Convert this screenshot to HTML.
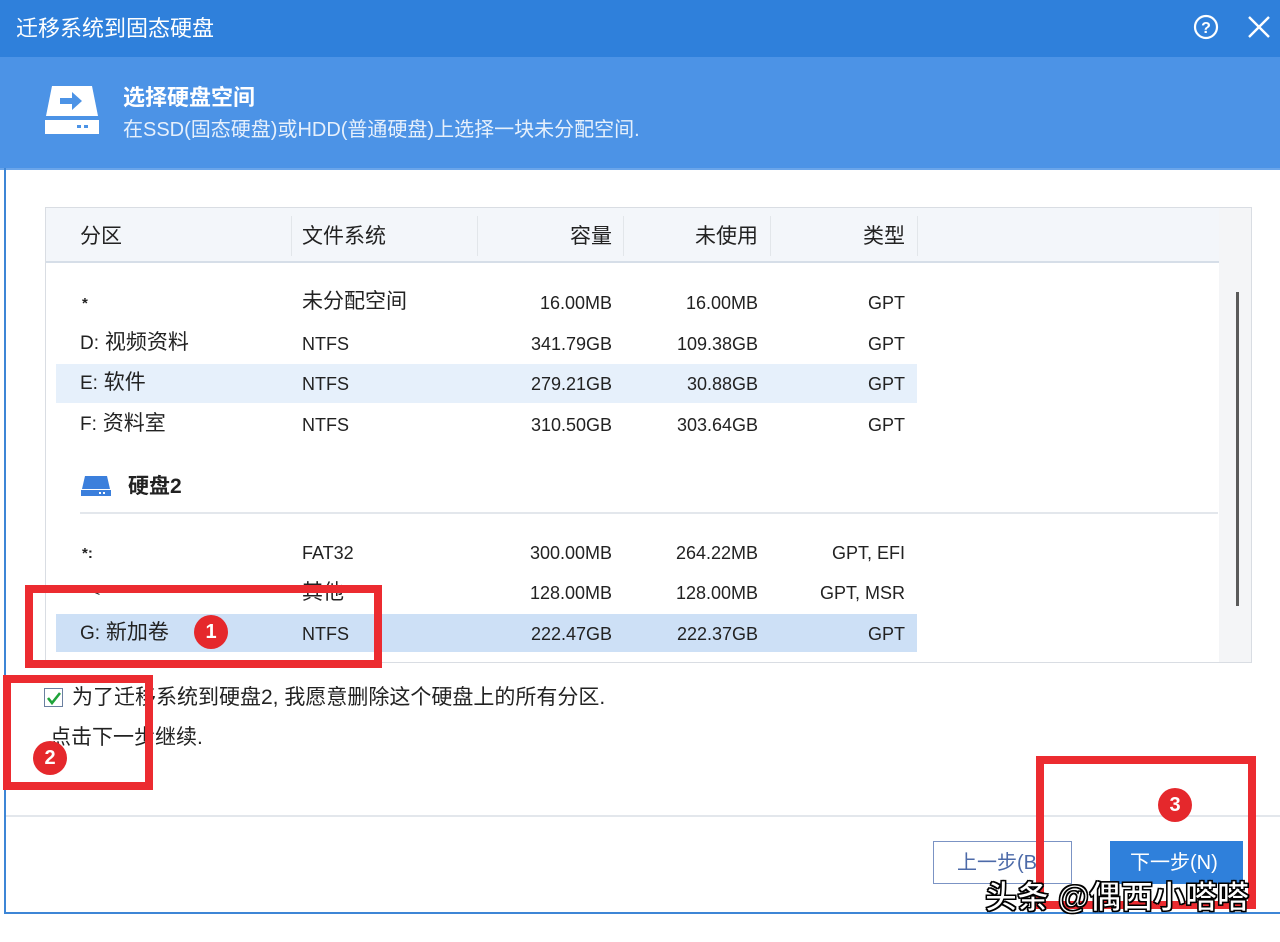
<!DOCTYPE html>
<html><head><meta charset="utf-8">
<style>
*{margin:0;padding:0;box-sizing:border-box}
body{width:1280px;height:942px;background:#fff;position:relative;overflow:hidden;font-family:"Liberation Sans","Noto Sans CJK SC",sans-serif;color:#222}
.a{position:absolute}
.t{position:absolute;font-size:20px;line-height:24px;white-space:nowrap}
.r{text-align:right}
.box{position:absolute;border:8px solid #ec2b30}
.c{position:absolute;width:34px;height:34px;border-radius:50%;background:#e5282c;color:#fff;font-size:20px;font-weight:bold;text-align:center;line-height:34px}
</style></head><body>
<div class="a" style="left:0;top:0;width:1280px;height:57px;background:#2f80db"></div>
<div class="t" style="left:16px;top:16px;color:#fff;font-size:22px;line-height:26px">迁移系统到固态硬盘</div>
<svg class="a" style="left:1192px;top:13px" width="28" height="28"><circle cx="14" cy="14" r="11" fill="none" stroke="#fff" stroke-width="2.2"/><text x="14" y="20" font-size="16" font-weight="bold" fill="#fff" text-anchor="middle" font-family="Liberation Sans">?</text></svg>
<svg class="a" style="left:1246px;top:14px" width="26" height="26"><path d="M3 3L23 23M23 3L3 23" stroke="#fff" stroke-width="2.4"/></svg>
<div class="a" style="left:0;top:57px;width:1280px;height:111px;background:#4c93e6"></div>
<div class="a" style="left:0;top:168px;width:1280px;height:2px;background:#6aa5ea"></div>
<svg class="a" style="left:44px;top:82px" width="56" height="56"><path d="M8 4H48L54 34H2Z" fill="#fff"/><rect x="1" y="38" width="54" height="14" fill="#fff"/><rect x="33" y="43" width="4" height="3" fill="#4c93e6"/><rect x="40" y="43" width="4" height="3" fill="#4c93e6"/><path d="M16 16H28V10L38 19L28 28V22H16Z" fill="#4c93e6"/></svg>
<div class="t" style="left:123px;top:86px;color:#fff;font-size:22px;font-weight:bold">选择硬盘空间</div>
<div class="t" style="left:123px;top:118px;color:#e6f0fc;font-size:20px">在SSD(固态硬盘)或HDD(普通硬盘)上选择一块未分配空间.</div>
<div class="a" style="left:4px;top:168px;width:2px;height:746px;background:#3d86d6"></div>
<div class="a" style="left:4px;top:912px;width:1276px;height:2px;background:#3d86d6"></div>

<div class="a" style="left:45px;top:207px;width:1207px;height:456px;border:1px solid #d9dde3;background:#fff"></div>
<div class="a" style="left:46px;top:208px;width:1173px;height:55px;background:#f3f6fa;border-bottom:2px solid #d6dee8"></div>
<div class="a" style="left:1219px;top:208px;width:32px;height:454px;background:#f4f5f7"></div>
<div class="a" style="left:1236px;top:292px;width:3px;height:314px;background:#5a5a5a"></div>
<div class="a" style="left:291px;top:216px;width:1px;height:40px;background:#e2e6ea"></div>
<div class="a" style="left:477px;top:216px;width:1px;height:40px;background:#e2e6ea"></div>
<div class="a" style="left:623px;top:216px;width:1px;height:40px;background:#e2e6ea"></div>
<div class="a" style="left:770px;top:216px;width:1px;height:40px;background:#e2e6ea"></div>
<div class="a" style="left:917px;top:216px;width:1px;height:40px;background:#e2e6ea"></div>
<div class="t" style="left:80px;top:225px;font-size:21px">分区</div>
<div class="t" style="left:302px;top:225px;font-size:21px">文件系统</div>
<div class="t r" style="left:500px;width:112px;top:225px;font-size:21px">容量</div>
<div class="t r" style="left:640px;width:118px;top:225px;font-size:21px">未使用</div>
<div class="t r" style="left:790px;width:115px;top:225px;font-size:21px">类型</div>

<div class="a" style="left:56px;top:364px;width:861px;height:39px;background:#e6f0fb"></div>
<div class="a" style="left:56px;top:614px;width:861px;height:38px;background:#cde0f6"></div>

<div class="t" style="left:82px;top:292px;font-size:15px;font-weight:bold">*</div>
<div class="t" style="left:302px;top:290px;font-size:21px">未分配空间</div>
<div class="t r" style="left:480px;width:132px;top:291px;font-size:18px">16.00MB</div>
<div class="t r" style="left:630px;width:128px;top:291px;font-size:18px">16.00MB</div>
<div class="t r" style="left:790px;width:115px;top:291px;font-size:18px">GPT</div>

<div class="t" style="left:80px;top:331px;font-size:21px"><span style="font-size:19px">D:</span> 视频资料</div>
<div class="t" style="left:302px;top:332px;font-size:18px">NTFS</div>
<div class="t r" style="left:480px;width:132px;top:332px;font-size:18px">341.79GB</div>
<div class="t r" style="left:630px;width:128px;top:332px;font-size:18px">109.38GB</div>
<div class="t r" style="left:790px;width:115px;top:332px;font-size:18px">GPT</div>

<div class="t" style="left:80px;top:371px;font-size:21px"><span style="font-size:19px">E:</span> 软件</div>
<div class="t" style="left:302px;top:372px;font-size:18px">NTFS</div>
<div class="t r" style="left:480px;width:132px;top:372px;font-size:18px">279.21GB</div>
<div class="t r" style="left:630px;width:128px;top:372px;font-size:18px">30.88GB</div>
<div class="t r" style="left:790px;width:115px;top:372px;font-size:18px">GPT</div>

<div class="t" style="left:80px;top:412px;font-size:21px"><span style="font-size:19px">F:</span> 资料室</div>
<div class="t" style="left:302px;top:413px;font-size:18px">NTFS</div>
<div class="t r" style="left:480px;width:132px;top:413px;font-size:18px">310.50GB</div>
<div class="t r" style="left:630px;width:128px;top:413px;font-size:18px">303.64GB</div>
<div class="t r" style="left:790px;width:115px;top:413px;font-size:18px">GPT</div>

<svg class="a" style="left:80px;top:475px" width="32" height="22"><path d="M5 1H27L30 14H2Z" fill="#3b7fdc"/><rect x="1" y="15" width="30" height="6" fill="#3b7fdc"/><rect x="19" y="17" width="2" height="2" fill="#fff"/><rect x="23" y="17" width="2" height="2" fill="#fff"/></svg>
<div class="t" style="left:128px;top:475px;font-size:21px;font-weight:bold">硬盘2</div>
<div class="a" style="left:80px;top:512px;width:1138px;height:2px;background:#e3e7ec"></div>

<div class="t" style="left:82px;top:542px;font-size:15px;font-weight:bold">*:</div>
<div class="t" style="left:302px;top:541px;font-size:18px">FAT32</div>
<div class="t r" style="left:480px;width:132px;top:541px;font-size:18px">300.00MB</div>
<div class="t r" style="left:630px;width:128px;top:541px;font-size:18px">264.22MB</div>
<div class="t r" style="left:790px;width:115px;top:541px;font-size:18px">GPT, EFI</div>

<div class="t" style="left:92px;top:579px;font-size:14px">&lt;</div>
<div class="t" style="left:302px;top:581px;font-size:21px">其他</div>
<div class="t r" style="left:480px;width:132px;top:581px;font-size:18px">128.00MB</div>
<div class="t r" style="left:630px;width:128px;top:581px;font-size:18px">128.00MB</div>
<div class="t r" style="left:790px;width:115px;top:581px;font-size:18px">GPT, MSR</div>

<div class="t" style="left:80px;top:621px;font-size:21px"><span style="font-size:19px">G:</span> 新加卷</div>
<div class="t" style="left:302px;top:622px;font-size:18px">NTFS</div>
<div class="t r" style="left:480px;width:132px;top:622px;font-size:18px">222.47GB</div>
<div class="t r" style="left:630px;width:128px;top:622px;font-size:18px">222.37GB</div>
<div class="t r" style="left:790px;width:115px;top:622px;font-size:18px">GPT</div>

<div class="a" style="left:44px;top:688px;width:19px;height:19px;border:1px solid #6a7fa0;background:#fff"></div>
<svg class="a" style="left:45px;top:689px" width="18" height="18"><path d="M3 9L7 14L15 4" fill="none" stroke="#1fa33a" stroke-width="2.6"/></svg>
<div class="t" style="left:72px;top:686px;font-size:21px">为了迁移系统到硬盘2, 我愿意删除这个硬盘上的所有分区.</div>
<div class="t" style="left:50px;top:726px;font-size:21px">点击下一步继续.</div>

<div class="a" style="left:6px;top:815px;width:1274px;height:2px;background:#e3e7ec"></div>
<div class="a" style="left:933px;top:841px;width:139px;height:43px;border:1px solid #7b93c4;background:#fff"></div>
<div class="t" style="left:957px;top:851px;font-size:20px;color:#4c6aa8">上一步(B)</div>
<div class="a" style="left:1110px;top:841px;width:133px;height:43px;background:#2f80db"></div>
<div class="t" style="left:1130px;top:851px;font-size:20px;color:#fff">下一步(N)</div>

<div class="box" style="left:25px;top:585px;width:357px;height:83px"></div>
<div class="c" style="left:194px;top:615px">1</div>
<div class="box" style="left:3px;top:675px;width:150px;height:115px"></div>
<div class="c" style="left:33px;top:741px">2</div>
<div class="box" style="left:1036px;top:756px;width:220px;height:153px"></div>
<div class="c" style="left:1158px;top:788px">3</div>

<div class="t" style="left:985px;top:878px;font-size:32px;line-height:38px;color:#fff;-webkit-text-stroke:1px #000;font-weight:bold;text-shadow:1px 1px 0 #000,-1px -1px 0 #000,1px -1px 0 #000,-1px 1px 0 #000">头条 @偶西小嗒嗒</div>
</body></html>
